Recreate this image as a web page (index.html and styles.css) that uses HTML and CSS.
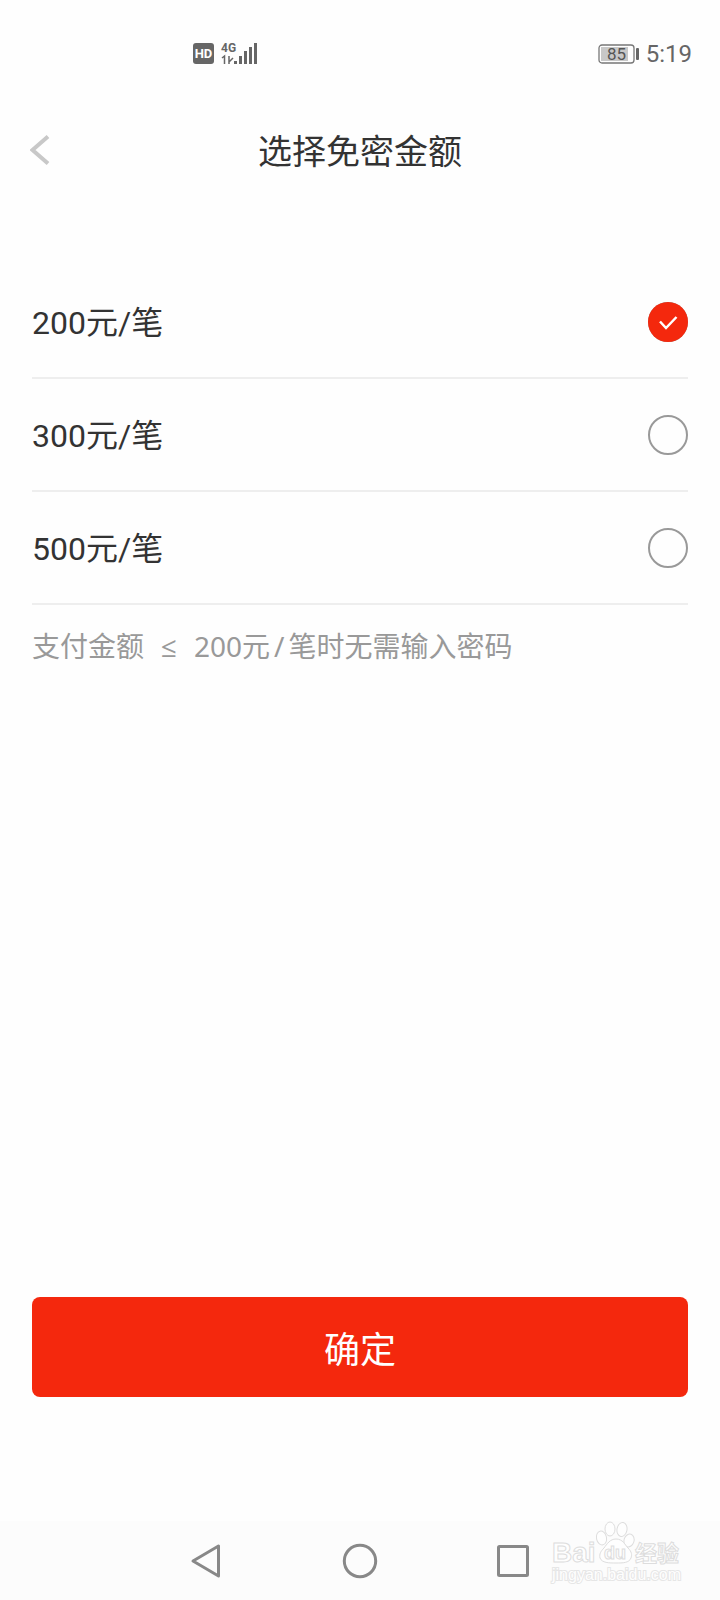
FILE: index.html
```html
<!DOCTYPE html>
<html lang="zh-CN">
<head>
<meta charset="utf-8">
<meta name="viewport" content="width=device-width, initial-scale=1">
<title>选择免密金额</title>
<link rel="stylesheet" href="styles.css">
</head>
<body>
<div class="status">
  <svg class="network" width="66" height="24" viewBox="0 0 66 24" aria-hidden="true">
    <rect x="1" y="1" width="21" height="21" rx="3" fill="#666"/>
    <text class="hd" x="11.5" y="16" text-anchor="middle">HD</text>
    <text class="gen" x="29" y="10">4G</text>
    <path d="M30 16l2.500-2v8M37 14v8M37 20l4-4" fill="none" stroke="#666" stroke-width="1.500"/>
    <path d="M43.500 19v3M48.500 14v8M53.500 9v13M58.500 5v17M63.500 1v21" fill="none" stroke="#666" stroke-width="3"/>
  </svg>
  <div class="power">
    <svg width="42" height="20" viewBox="0 0 42 20" aria-label="85%">
      <rect x="1" y="1" width="35" height="18" rx="3" fill="none" stroke="#777" stroke-width="1.300"/>
      <rect x="3" y="3" width="27" height="14" fill="#c8c8c8"/>
      <rect x="38" y="4" width="3" height="12" rx="1" fill="#666"/>
      <text class="level" x="18.500" y="16" text-anchor="middle">85</text>
    </svg>
    <time>5:19</time>
  </div>
</div>
<header class="header">
  <button class="back" type="button" aria-label="返回">
    <svg width="20" height="30" viewBox="0 0 20 30"><path d="M18 1.500L2.500 15 18 28.500" fill="none" stroke="#c8c8c8" stroke-width="4"/></svg>
  </button>
  <h1>选择免密金额</h1>
</header>
<form class="form">
  <div class="options" role="radiogroup" aria-label="免密金额">
    <label class="option"><span>200元/笔</span><input type="radio" name="limit" value="200" checked>
      <svg class="tick" width="40" height="40" viewBox="0 0 40 40" aria-hidden="true"><circle cx="20" cy="20" r="20" fill="#f4280d"/><path d="M12 19.500l6 6.500L28.500 15" fill="none" stroke="#fff" stroke-width="2.500"/></svg>
    </label>
    <label class="option"><span>300元/笔</span><input type="radio" name="limit" value="300">
      <svg class="tick" width="40" height="40" viewBox="0 0 40 40" aria-hidden="true"><circle cx="20" cy="20" r="20" fill="#f4280d"/><path d="M12 19.500l6 6.500L28.500 15" fill="none" stroke="#fff" stroke-width="2.500"/></svg>
    </label>
    <label class="option"><span>500元/笔</span><input type="radio" name="limit" value="500">
      <svg class="tick" width="40" height="40" viewBox="0 0 40 40" aria-hidden="true"><circle cx="20" cy="20" r="20" fill="#f4280d"/><path d="M12 19.500l6 6.500L28.500 15" fill="none" stroke="#fff" stroke-width="2.500"/></svg>
    </label>
  </div>
  <p class="note">支付金额<span class="compare">≤</span>200元<span class="slash">/</span>笔时无需输入密码</p>
  <button class="confirm" type="button">确定</button>
</form>
<nav class="nav" aria-label="系统导航">
  <button type="button" aria-label="后退"><svg width="36" height="36" viewBox="0 0 36 36"><path d="M4 18L29.500 3v30z"/></svg></button>
  <button type="button" aria-label="主屏幕"><svg width="36" height="36" viewBox="0 0 36 36"><circle cx="18" cy="18" r="15.700"/></svg></button>
  <button type="button" aria-label="最近任务"><svg width="36" height="36" viewBox="0 0 36 36"><rect x="3.500" y="3.500" width="29" height="29" rx="1"/></svg></button>
  <svg class="mark" width="134" height="68" viewBox="0 0 134 68" aria-label="Baidu 经验">
    <text class="brand" x="2" y="41">Bai</text>
    <ellipse cx="51.500" cy="17" rx="5" ry="7" transform="rotate(-12 51.500 17)"/>
    <ellipse cx="60" cy="8" rx="5" ry="7"/>
    <ellipse cx="72" cy="8.500" rx="5" ry="7" transform="rotate(10 72 8.500)"/>
    <ellipse cx="79" cy="19.500" rx="5" ry="6.500" transform="rotate(18 79 19.500)"/>
    <path d="M66 18c7 0 9 6 12 9 4 4 4 7 3 10-2 5-8 5-15 5s-14 0-16-5c-1-4 1-7 4-10 3-4 6-9 12-9z"/>
    <text class="du" x="65" y="38" text-anchor="middle">du</text>
    <text class="cn" x="85" y="40">经验</text>
    <text class="site" x="2" y="59">jingyan.baidu.com</text>
  </svg>
</nav>
</body>
</html>
```
FILE: styles.css
```css
* {
  box-sizing: border-box;
}

body {
  margin: 0;
  min-height: 100vh;
  display: flex;
  flex-direction: column;
  background: #fefefe;
  color: #333;
  font-family: Roboto, "Noto Sans CJK SC", sans-serif;
}

button {
  border: 0;
  padding: 0;
  background: none;
  font: inherit;
}

svg {
  display: block;
}

.status {
  height: 104px;
  padding: 4px 28px 0 192px;
  display: flex;
  align-items: center;
  justify-content: space-between;
  color: #666;
}

.power {
  display: flex;
  align-items: center;
  gap: 6px;
  font-size: 24px;
}

.hd,
.gen,
.level {
  font-family: Roboto, sans-serif;
}

.hd {
  font-size: 13px;
  font-weight: 700;
  fill: #fff;
}

.gen {
  font-size: 12px;
  font-weight: 700;
  fill: #666;
}

.level {
  font-size: 17px;
  fill: #555;
}

.header {
  height: 96px;
  padding: 0 30px;
  display: grid;
  grid-template-columns: 20px 1fr 20px;
  align-items: center;
}

.back {
  padding-bottom: 4px;
}

.header h1 {
  margin: 0;
  text-align: center;
  font-size: 34px;
  font-weight: 400;
  line-height: 48px;
}

.form {
  flex: 1;
  padding: 66px 32px 124px;
  display: flex;
  flex-direction: column;
}

.option {
  position: relative;
  height: 113px;
  border-bottom: 2px solid #eee;
  display: flex;
  align-items: center;
  justify-content: space-between;
  font-size: 32px;
}

.option span {
  padding-bottom: 4px;
}

.option input {
  appearance: none;
  width: 40px;
  height: 40px;
  margin: 0;
  border: 2px solid #999;
  border-radius: 50%;
}

.tick {
  display: none;
  position: absolute;
  right: 0;
  pointer-events: none;
}

.option input:checked + .tick {
  display: block;
}

.note {
  margin: 21px 0;
  color: #999;
  font-family: "Noto Sans", "Noto Sans CJK SC", sans-serif;
  font-size: 28px;
  line-height: 40px;
}

.compare {
  margin: 0 17px;
  font-family: "Open Sans", Roboto, sans-serif;
}

.slash {
  margin: 0 4px;
}

.confirm {
  margin-top: auto;
  height: 100px;
  border-radius: 8px;
  background: #f4280d;
  color: #fff;
  font-size: 36px;
}

.nav {
  position: relative;
  height: 79px;
  background: #fcfcfc;
  display: flex;
  align-items: center;
  justify-content: center;
  gap: 117px;
}

.nav button svg {
  fill: none;
  stroke: #888;
  stroke-width: 3;
  stroke-linejoin: round;
}

.mark {
  position: absolute;
  right: 36px;
  bottom: 11px;
  overflow: visible;
  fill: #fefefe;
  stroke: #ddd;
  stroke-width: 1;
}

.mark text {
  font-family: "Liberation Sans", "Noto Sans CJK SC", sans-serif;
  font-weight: 700;
}

.brand {
  font-size: 28px;
}

.du {
  font-size: 18px;
}

.cn {
  font-size: 22px;
}

.mark .site {
  font-size: 16px;
  font-weight: 400;
  paint-order: stroke;
  stroke: #e6e6e6;
  stroke-width: 2;
}
```
